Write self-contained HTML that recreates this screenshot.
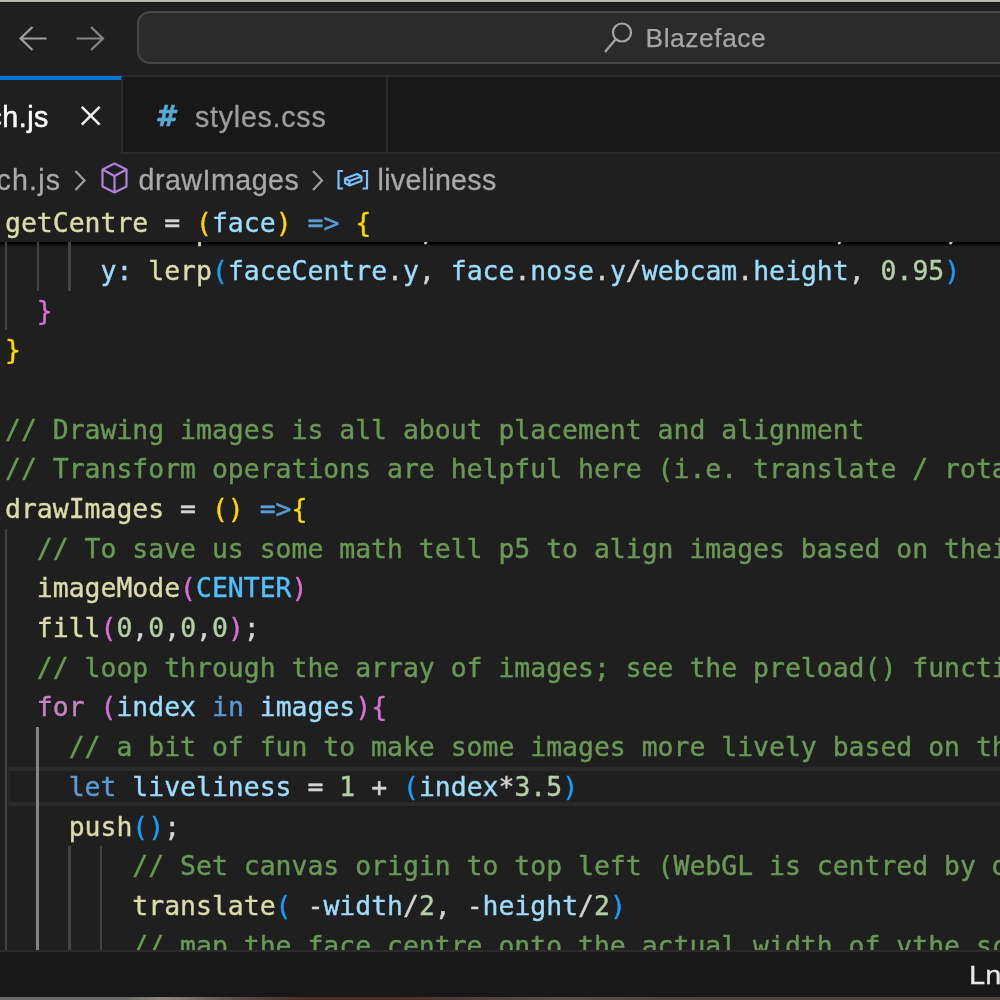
<!DOCTYPE html>
<html lang="en">
<head>
<meta charset="utf-8">
<title>sketch.js - Blazeface</title>
<style>
html,body{margin:0;padding:0;}
body{-webkit-font-smoothing:antialiased;width:1000px;height:1000px;overflow:hidden;background:#1f1f1f;position:relative;
  font-family:"Liberation Sans",sans-serif;color:#cccccc;}
#root{position:absolute;left:0;top:0;width:1000px;height:1000px;overflow:hidden;will-change:transform;}
.abs{position:absolute;}
#topstrip{left:0;top:0;width:1000px;height:2.4px;background:#b8b5ae;border-bottom:1.6px solid #151515;}
#titlebar{left:0;top:2px;width:1000px;height:74px;background:#1f1f1f;}
#titleborder{left:0;top:75px;width:1000px;height:2px;background:#2b2b2b;}
#search{left:137px;top:11px;width:900px;height:49px;border:2px solid #474747;border-radius:13px;background:#2b2b2b;}
#searchtext{left:645.5px;top:22.8px;font-size:26.4px;line-height:30px;color:#a6a6a6;white-space:pre;letter-spacing:0.55px;-webkit-text-stroke:0.25px currentColor;}
#tabs{left:0;top:77px;width:1000px;height:77.4px;background:#181818;}
#tabsborder{left:0;top:152.2px;width:1000px;height:2.2px;background:#2b2b2b;}
#tab1{left:0;top:77px;width:122px;height:77.4px;background:#1f1f1f;}
#tab1top{left:0;top:76px;width:122px;height:3.5px;background:#0078d4;}
.tabsep{top:77px;width:2px;height:77.4px;background:#2b2b2b;}
.tabtext{font-size:28.6px;line-height:34px;white-space:pre;top:100px;letter-spacing:0.5px;-webkit-text-stroke:0.3px currentColor;}
#crumbs{left:0;top:154.4px;width:1000px;height:48px;background:#1f1f1f;}
.crumb{font-size:28.6px;line-height:34px;white-space:pre;top:163px;color:#a9a9a9;letter-spacing:0.45px;-webkit-text-stroke:0.3px currentColor;}
#editor{left:0;top:201px;width:1000px;height:749px;background:#1f1f1f;overflow:hidden;}
.ln{position:absolute;left:5px;-webkit-text-stroke:0.4px currentColor;height:39.68px;line-height:39.68px;font-family:"DejaVu Sans Mono","Liberation Mono",monospace;
  font-size:26.456px;white-space:pre;color:#d4d4d4;}
.g{position:absolute;width:2.2px;background:#444444;margin-left:-0.3px;}
.ga{position:absolute;width:2.6px;background:#858585;margin-left:-0.6px;}
.c{color:#6a9955}.f{color:#dcdcaa}.v{color:#9cdcfe}.k{color:#569cd6}.p{color:#c586c0}.n{color:#b5cea8}.o{color:#4fc1ff}
.hd{color:transparent}
.b1{color:#ffd700}.b2{color:#da70d6}.b3{color:#179fff}
#sticky{left:0;top:202.9px;width:1000px;height:38.9px;background:#1f1f1f;}
#stickyshadow{left:0;top:40.3px;width:1000px;height:6.2px;background:linear-gradient(180deg,rgba(0,0,0,0.35) 0,rgba(0,0,0,0.95) 1.2px,rgba(0,0,0,0.95) 2.6px,rgba(0,0,0,0.45) 4px,rgba(0,0,0,0) 6.2px);}
#curline{left:7.5px;top:565.9px;width:1000px;height:30.9px;border-top:4.4px solid #2a2a2a;border-bottom:4.4px solid #2a2a2a;border-left:2px solid #262626;}
#status{left:0;top:950px;width:1000px;height:47.4px;background:#181818;}
#statusborder{left:0;top:950px;width:1000px;height:2px;background:#2b2b2b;}
#statustext{-webkit-text-stroke:0.3px currentColor;transform:scaleX(1.1);transform-origin:0 0;left:969px;top:960px;font-size:26.4px;line-height:30px;color:#e6e6e6;white-space:pre;}
#bottomstrip{left:0;top:997.4px;width:1000px;height:3px;background:linear-gradient(90deg,#6d6b67 0,#6d6b67 125px,#8b8780 160px,#5a5048 235px,#4a302a 300px,#4a302a 400px,#55504a 560px,#4a463c 700px,#4a463c 1000px);}
</style>
</head>
<body>
<div id="root">
<div class="abs" id="titlebar"></div>
<div class="abs" id="topstrip"></div>
<div class="abs" id="titleborder"></div>
<div class="abs" id="search"></div>
<svg class="abs" style="left:0;top:0" width="1000" height="77" viewBox="0 0 1000 77" fill="none" stroke-linecap="butt" stroke-linejoin="miter">
  <path d="M46.5 38.5H20.5M32.5 27L20.5 38.5L32.5 50" stroke="#a0a0a0" stroke-width="2.2"/>
  <path d="M76.5 38.5H102.5M91 27L103 38.5L91 50" stroke="#858585" stroke-width="2.2"/>
  <circle cx="622" cy="32.5" r="9" stroke="#a6a6a6" stroke-width="2.2"/>
  <path d="M615.5 39.5L605 52" stroke="#a6a6a6" stroke-width="2.2"/>
</svg>
<div class="abs" id="searchtext">Blazeface</div>

<div class="abs" id="tabs"></div>
<div class="abs" id="tabsborder"></div>
<div class="abs" id="tab1"></div>
<div class="abs" id="tab1top"></div>
<div class="abs tabsep" style="left:121px"></div>
<div class="abs tabsep" style="left:386px"></div>
<div class="abs tabtext" style="left:-12.5px;color:#ffffff;-webkit-text-stroke:0.5px currentColor">ch.js</div>
<svg class="abs" style="left:76px;top:101px" width="30" height="30" viewBox="0 0 30 30" fill="none">
  <path d="M5.800 5.800L23.600 23.600M23.600 5.800L5.800 23.600" stroke="#ededed" stroke-width="2.6"/>
</svg>
<div class="abs tabtext" style="left:155.5px;top:97.8px;color:#58a9d3;font-family:'DejaVu Sans','Liberation Sans',sans-serif;font-weight:bold;font-style:italic;font-size:28px;line-height:38px;letter-spacing:0;-webkit-text-stroke:0.6px currentColor">#</div>
<div class="abs tabtext" style="left:195px;color:#9d9d9d;letter-spacing:0.75px">styles.css</div>

<div class="abs" id="crumbs"></div>
<div class="abs crumb" style="left:-3.5px;letter-spacing:1.2px">ch.js</div>
<div class="abs crumb" style="left:138.5px;letter-spacing:0.5px">drawImages</div>
<div class="abs crumb" style="left:377.5px;letter-spacing:0.3px">liveliness</div>
<svg class="abs" style="left:0;top:153px" width="520" height="48" viewBox="0 0 520 48" fill="none" stroke-linejoin="round">
  <path d="M75.500 18L84.500 27.500L75.500 37" stroke="#9d9d9d" stroke-width="2.2" stroke-linejoin="miter"/>
  <path d="M313 18L322 27.500L313 37" stroke="#9d9d9d" stroke-width="2.2" stroke-linejoin="miter"/>
  <path d="M114.500 10.500L126.500 16.500V33.500L114.500 39.500L102.500 33.500V16.500ZM102.500 16.500L114.500 23L126.500 16.500M114.500 23V39.500" stroke="#b180d7" stroke-width="2.2"/>
  <g stroke="#75beff" stroke-width="2.2">
    <path d="M343 18H338.500V35.500H343M362.500 18H367V35.500H362.500" stroke-linejoin="miter"/>
    <path d="M345 25.500L357 21L361.500 23.500V28L349.500 32.500L345 30ZM345 25.500L349.500 28L361.500 23.500M349.500 28V32.500"/>
  </g>
</svg>

<div class="abs" id="editor">
<div class="abs" id="curline"></div>
<div class="abs" id="stickyshadow"></div>
<div class="g" style="left:5.0px;top:10.3px;height:119.0px"></div>
<div class="g" style="left:36.8px;top:10.3px;height:79.4px"></div>
<div class="g" style="left:68.7px;top:10.3px;height:79.4px"></div>
<div class="g" style="left:5.0px;top:327.8px;height:436.5px"></div>
<div class="ga" style="left:36.8px;top:526.2px;height:238.1px"></div>
<div class="g" style="left:68.7px;top:645.2px;height:119.0px"></div>
<div class="g" style="left:100.5px;top:645.2px;height:119.0px"></div>
<div class="ln" style="top:10.32px">      <span class="v">x</span><span class="v">:</span> <span class="f">lerp</span><span class="hd">(</span><span class="v">faceCentre</span>.<span class="v">x</span>, <span class="v">face</span>.<span class="v">nose</span>.<span class="v">x</span><span class="hd">/</span><span class="v">webcam</span>.<span class="v">width</span>, <span class="n">0.95</span><span class="hd">)</span>,</div>
<div class="ln" style="top:50.00px">      <span class="v">y:</span> <span class="f">lerp</span><span class="b3">(</span><span class="v">faceCentre</span>.<span class="v">y</span>, <span class="v">face</span>.<span class="v">nose</span>.<span class="v">y</span>/<span class="v">webcam</span>.<span class="v">height</span>, <span class="n">0.95</span><span class="b3">)</span></div>
<div class="ln" style="top:89.68px">  <span class="b2">}</span></div>
<div class="ln" style="top:129.36px"><span class="b1">}</span></div>
<div class="ln" style="top:169.04px"></div>
<div class="ln" style="top:208.72px"><span class="c">// Drawing images is all about placement and alignment</span></div>
<div class="ln" style="top:248.40px"><span class="c">// Transform operations are helpful here (i.e. translate / rotate / scale)</span></div>
<div class="ln" style="top:288.08px"><span class="f">drawImages</span> = <span class="b1">()</span> <span class="k">=&gt;</span><span class="b1">{</span></div>
<div class="ln" style="top:327.76px">  <span class="c">// To save us some math tell p5 to align images based on their centre</span></div>
<div class="ln" style="top:367.44px">  <span class="f">imageMode</span><span class="b2">(</span><span class="o">CENTER</span><span class="b2">)</span></div>
<div class="ln" style="top:407.12px">  <span class="f">fill</span><span class="b2">(</span><span class="n">0</span>,<span class="n">0</span>,<span class="n">0</span>,<span class="n">0</span><span class="b2">)</span>;</div>
<div class="ln" style="top:446.80px">  <span class="c">// loop through the array of images; see the preload() function above</span></div>
<div class="ln" style="top:486.48px">  <span class="p">for</span> <span class="b2">(</span><span class="v">index</span> <span class="k">in</span> <span class="v">images</span><span class="b2">){</span></div>
<div class="ln" style="top:526.16px">    <span class="c">// a bit of fun to make some images more lively based on their index</span></div>
<div class="ln" style="top:565.84px">    <span class="k">let</span> <span class="v">liveliness</span> = <span class="n">1</span> + <span class="b3">(</span><span class="v">index</span>*<span class="n">3.5</span><span class="b3">)</span></div>
<div class="ln" style="top:605.52px">    <span class="f">push</span><span class="b3">()</span>;</div>
<div class="ln" style="top:645.20px">        <span class="c">// Set canvas origin to top left (WebGL is centred by default)</span></div>
<div class="ln" style="top:684.88px">        <span class="f">translate</span><span class="b3">(</span> -<span class="v">width</span>/<span class="n">2</span>, -<span class="v">height</span>/<span class="n">2</span><span class="b3">)</span></div>
<div class="ln" style="top:724.56px">        <span class="c">// map the face centre onto the actual width of vthe screen</span></div>
</div>
<div class="abs" id="sticky"><div class="ln" style="top:0"><span class="f">getCentre</span> = <span class="b1">(</span><span class="v">face</span><span class="b1">)</span> <span class="k">=&gt;</span> <span class="b1">{</span></div></div>
<div class="abs" id="status"></div>
<div class="abs" id="statusborder"></div>
<div class="abs" id="statustext">Ln 86</div>
<div class="abs" id="bottomstrip"></div>
</div>
</body>
</html>
